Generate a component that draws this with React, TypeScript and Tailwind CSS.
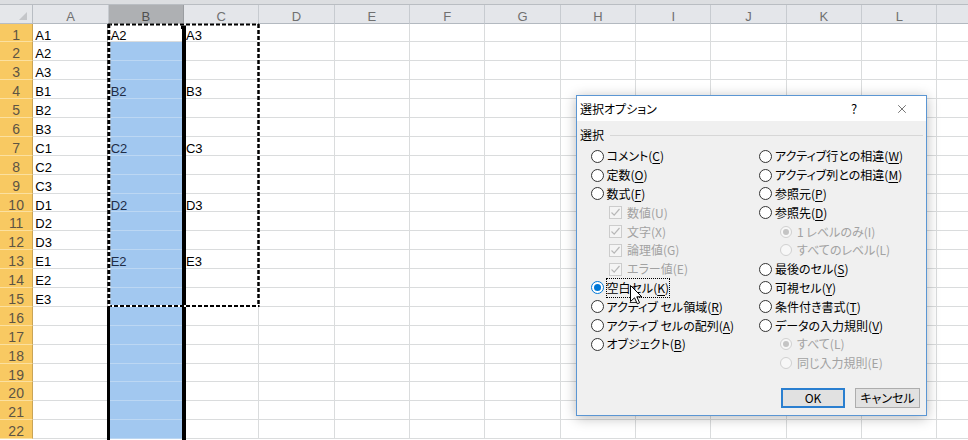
import { X } from "lucide-react"

const COLS = ["A", "B", "C", "D", "E", "F", "G", "H", "I", "J", "K", "L", "M"]
const ROWS = Array.from({ length: 22 }, (_, i) => i + 1)

const DATA: Record<string, string> = {}
;["A", "B", "C", "D", "E"].forEach((letter, g) => {
  for (let j = 0; j < 3; j++) DATA[`A${g * 3 + j + 1}`] = `${letter}${j + 1}`
  DATA[`B${g * 3 + 1}`] = `${letter}2`
  DATA[`C${g * 3 + 1}`] = `${letter}3`
})

type Item = {
  text: string
  acc: string
  kind?: "radio" | "check" | "sub"
  checked?: boolean
  disabled?: boolean
  focus?: boolean
}

const LEFT: Item[] = [
  { text: "コメント", acc: "C" },
  { text: "定数", acc: "O" },
  { text: "数式", acc: "F" },
  { text: "数値", acc: "U", kind: "check", checked: true, disabled: true },
  { text: "文字", acc: "X", kind: "check", checked: true, disabled: true },
  { text: "論理値", acc: "G", kind: "check", checked: true, disabled: true },
  { text: "エラー値", acc: "E", kind: "check", checked: true, disabled: true },
  { text: "空白セル", acc: "K", checked: true, focus: true },
  { text: "アクティブ セル領域", acc: "R" },
  { text: "アクティブ セルの配列", acc: "A" },
  { text: "オブジェクト", acc: "B" },
]

const RIGHT: Item[] = [
  { text: "アクティブ行との相違", acc: "W" },
  { text: "アクティブ列との相違", acc: "M" },
  { text: "参照元", acc: "P" },
  { text: "参照先", acc: "D" },
  { text: "1 レベルのみ", acc: "I", kind: "sub", checked: true, disabled: true },
  { text: "すべてのレベル", acc: "L", kind: "sub", disabled: true },
  { text: "最後のセル", acc: "S" },
  { text: "可視セル", acc: "Y" },
  { text: "条件付き書式", acc: "T" },
  { text: "データの入力規則", acc: "V" },
  { text: "すべて", acc: "L", kind: "sub", checked: true, disabled: true },
  { text: "同じ入力規則", acc: "E", kind: "sub", disabled: true },
]

function Radio({ checked, disabled }: { checked?: boolean; disabled?: boolean }) {
  if (disabled) {
    return (
      <span className="flex h-[12px] w-[12px] shrink-0 items-center justify-center rounded-full border border-[#d0d0d0] bg-[#f7f7f7]">
        {checked && <span className="h-[6px] w-[6px] rounded-full bg-[#c4c4c4]" />}
      </span>
    )
  }
  return (
    <span
      className={
        checked
          ? "flex h-[13px] w-[13px] shrink-0 items-center justify-center rounded-full border border-[#0078d7] bg-white"
          : "flex h-[13px] w-[13px] shrink-0 items-center justify-center rounded-full border border-[#333333] bg-white"
      }
    >
      {checked && <span className="h-[7px] w-[7px] rounded-full bg-[#0078d7]" />}
    </span>
  )
}

function Check() {
  return (
    <span className="flex h-[13px] w-[13px] shrink-0 items-center justify-center border border-[#cccccc] bg-[#f4f4f4]">
      <svg width="11" height="11" viewBox="0 0 11 11">
        <path d="M1.5 5.5 L4.2 8.2 L9.5 2" fill="none" stroke="#b8b8b8" strokeWidth="1.2" />
      </svg>
    </span>
  )
}

function Option({ item }: { item: Item }) {
  const kind = item.kind ?? "radio"
  const label = (
    <span
      className={
        (item.disabled ? "text-[#a2a2a2] " : "text-black ") +
        (item.focus ? "outline-1 outline-dotted outline-black " : "") +
        "whitespace-pre"
      }
    >
      {item.text}(
      {item.disabled ? item.acc : <span className="underline underline-offset-2">{item.acc}</span>})
    </span>
  )
  if (kind === "check") {
    return (
      <div className="flex h-[18.8px] items-center gap-[5px] pl-[18.5px]">
        <Check />
        {label}
      </div>
    )
  }
  if (kind === "sub") {
    return (
      <div className="flex h-[18.8px] items-center gap-[5px] pl-[21px]">
        <Radio checked={item.checked} disabled />
        {label}
      </div>
    )
  }
  return (
    <div className="flex h-[18.8px] items-center gap-[3px]">
      <Radio checked={item.checked} />
      {label}
    </div>
  )
}

function Dialog() {
  return (
    <div className="absolute left-[576px] top-[95px] h-[321px] w-[351px] border border-[#5b96d3] bg-[#f0f0f0] font-['Noto_Sans_CJK_JP',sans-serif] text-[12px] text-black shadow-[0_2px_12px_rgba(0,0,0,0.28)] [font-feature-settings:'palt']">
      <div className="flex h-[25px] items-center bg-white">
        <span className="flex-1 pl-[3px]">選択オプション</span>
        <span className="flex w-[48px] justify-center text-[13px]">?</span>
        <span className="flex w-[48px] justify-center">
          <X size={14} strokeWidth={1} color="#111" />
        </span>
      </div>
      <div className="px-[3px] pt-[5px]">
        <div className="flex h-[18px] items-center gap-[6px]">
          <span>選択</span>
          <div className="h-px flex-1 bg-[#d7d7d7]" />
        </div>
        <div className="mt-[3px] flex pl-[10.5px]">
          <div className="flex w-[168.5px] shrink-0 flex-col">
            {LEFT.map((item) => (
              <Option key={item.text} item={item} />
            ))}
          </div>
          <div className="flex flex-1 flex-col">
            {RIGHT.map((item) => (
              <Option key={item.text + item.acc} item={item} />
            ))}
          </div>
        </div>
        <div className="mt-[15.5px] flex justify-end gap-[10px] pr-[3px]">
          <button className="flex h-[20px] w-[64px] items-center justify-center border-2 border-[#2a7fd0] bg-[#e1e1e1]">
            OK
          </button>
          <button className="flex h-[20px] w-[65px] items-center justify-center border border-[#adadad] bg-[#e1e1e1]">
            キャンセル
          </button>
        </div>
      </div>
      {/* mouse pointer */}
      <svg className="absolute left-[53px] top-[189px]" width="13" height="20" viewBox="0 0 13 20">
        <path
          d="M0.5 0.5 L0.5 16.5 L4.5 12.8 L7.3 18.8 L9.6 17.8 L6.8 11.8 L11.8 11.8 Z"
          fill="#fff"
          stroke="#000"
          strokeWidth="1"
        />
      </svg>
    </div>
  )
}

function cellClass(col: string, row: number) {
  const base =
    "w-[75.35px] shrink-0 overflow-hidden whitespace-nowrap border-r border-b px-[2px] pt-[4px] text-[13px] leading-[15px] "
  if (col === "B" && row > 1) return base + "border-[#bcd7f3] bg-[#a2c8f0] text-[#1f2d47]"
  return base + "border-[#dadcdd] bg-white text-black"
}

export default function App() {
  return (
    <div className="relative h-[440px] w-[968px] overflow-hidden bg-white font-['Liberation_Sans',Arial,sans-serif]">
      <div className="h-[5px] border-b border-[#b9bdc2] bg-[#dcdee1]" />
      <div className="flex h-[18.5px]">
        <div className="relative w-[33.3px] shrink-0 border-r border-b border-[#b8bdc3] bg-[#e5e7ea]">
          <svg className="absolute right-[5px] bottom-[3px]" width="8" height="8" viewBox="0 0 8 8">
            <path d="M8 0 L8 8 L0 8 Z" fill="#c4c6c9" />
          </svg>
        </div>
        {COLS.map((c) => (
          <div
            key={c}
            className={
              c === "B"
                ? "w-[75.35px] shrink-0 border-r border-b border-r-[#9a9da1] border-b-[#85898e] bg-[#aeb0b3] pt-[4px] text-center text-[13px] leading-[15px] text-[#4f4f4f]"
                : "w-[75.35px] shrink-0 border-r border-b border-r-[#c7cbd0] border-b-[#b3b9c0] bg-[#e4e6ea] pt-[4px] text-center text-[13px] leading-[15px] text-[#707070]"
            }
          >
            {/* M lies beyond the window edge; its letter is not visible */}
            {c === "M" ? "" : c}
          </div>
        ))}
      </div>
      {ROWS.map((r) => (
        <div key={r} className="flex h-[18.9px]">
          <div className="w-[33.3px] shrink-0 border-r border-b border-r-[#c9a457] border-b-[#fbe0a0] bg-[#f8c962] pt-[4px] text-center text-[14px] leading-[15px] text-[#5d5444]">
            {r}
          </div>
          {COLS.map((c) => (
            <div key={c} className={cellClass(c, r)}>
              {DATA[`${c}${r}`] ?? ""}
            </div>
          ))}
        </div>
      ))}

      {/* selection border of column B */}
      <div className="absolute left-[107.3px] top-[23.5px] bottom-0 w-[3px] bg-black" />
      <div className="absolute left-[182px] top-[23.5px] bottom-0 w-[3.5px] bg-black" />
      <div className="absolute left-[181px] top-[24px] h-[5px] w-[5px] bg-black" />

      {/* copy marquee B1:C15 */}
      <svg className="absolute left-[105px] top-[21px]" width="158" height="289" viewBox="0 0 158 289">
        <g fill="none">
          <path d="M3 3.5 H154" stroke="#fff" strokeWidth="2" />
          <path d="M3 3.5 H154" stroke="#000" strokeWidth="2" strokeDasharray="4 2" />
          <path d="M153.5 3 V285.5" stroke="#fff" strokeWidth="2.5" />
          <path d="M153.5 3 V285.5" stroke="#000" strokeWidth="2.5" strokeDasharray="4 2" />
          <path d="M3 285 H154.5" stroke="#fff" strokeWidth="2" />
          <path d="M3 285 H154.5" stroke="#000" strokeWidth="2" strokeDasharray="4 2" />
          <path d="M3.8 3 V286" stroke="#fff" strokeWidth="3" />
          <path d="M3.8 3 V286" stroke="#000" strokeWidth="3" strokeDasharray="4 2" />
        </g>
      </svg>

      <Dialog />
    </div>
  )
}
